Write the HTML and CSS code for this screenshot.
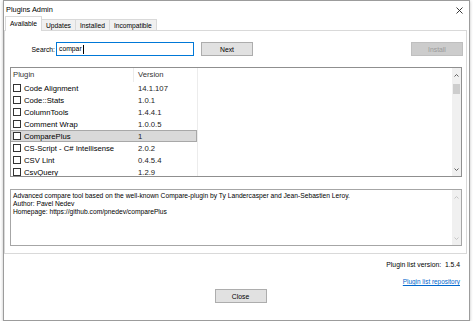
FILE: index.html
```html
<!DOCTYPE html>
<html lang="en">
<head>
    <meta charset="UTF-8">
    <meta name="viewport" content="width=device-width, initial-scale=1.0">
    <title>Plugins Admin</title>
    <link rel="stylesheet" href="styles.css">
</head>
<body>
    <div class="window">
        <div class="titlebar">
            <span class="title">Plugins Admin</span>
            <svg class="close-x" width="7" height="7" viewBox="0 0 7 7">
                <path d="M0.5 0.5 L6.5 6.5 M6.5 0.5 L0.5 6.5" stroke="#222" stroke-width="0.9" fill="none"/>
            </svg>
        </div>
        <div class="tabs">
            <div class="tab active">Available</div>
            <div class="tab">Updates</div>
            <div class="tab">Installed</div>
            <div class="tab">Incompatible</div>
        </div>
        <div class="panel">
            <div class="search-row">
                <span class="search-label">Search:</span>
                <div class="search-input">compar<span class="caret"></span></div>
                <button class="btn">Next</button>
                <span class="spacer"></span>
                <button class="btn btn-disabled">Install</button>
            </div>
            <div class="list">
                <div class="list-body">
                    <div class="list-cols">
                        <div class="list-head">
                            <span class="head-cell first">Plugin</span>
                            <span class="head-cell">Version</span>
                        </div>
                        <div class="row"><span class="name"><span class="check"></span>Code Alignment</span><span class="ver">14.1.107</span></div>
                        <div class="row"><span class="name"><span class="check"></span>Code::Stats</span><span class="ver">1.0.1</span></div>
                        <div class="row"><span class="name"><span class="check"></span>ColumnTools</span><span class="ver">1.4.4.1</span></div>
                        <div class="row"><span class="name"><span class="check"></span>Comment Wrap</span><span class="ver">1.0.0.5</span></div>
                        <div class="row selected"><span class="name"><span class="check"></span>ComparePlus</span><span class="ver">1</span></div>
                        <div class="row"><span class="name"><span class="check"></span>CS-Script - C# Intellisense</span><span class="ver">2.0.2</span></div>
                        <div class="row"><span class="name"><span class="check"></span>CSV Lint</span><span class="ver">0.4.5.4</span></div>
                        <div class="row"><span class="name"><span class="check"></span>CsvQuery</span><span class="ver">1.2.9</span></div>
                    </div>
                </div>
                <div class="vscroll">
                    <div class="arrow">
                        <svg width="5" height="3" viewBox="0 0 5 3"><path d="M0.5 2.5 L2.5 0.5 L4.5 2.5" stroke="#606060" fill="none"/></svg>
                    </div>
                    <div class="thumb"></div>
                    <div class="track"></div>
                    <div class="arrow">
                        <svg width="5" height="3" viewBox="0 0 5 3"><path d="M0.5 0.5 L2.5 2.5 L4.5 0.5" stroke="#606060" fill="none"/></svg>
                    </div>
                </div>
            </div>
            <div class="desc">
                <div class="desc-text">
                    Advanced compare tool based on the well-known Compare-plugin by Ty Landercasper and Jean-Sebastien Leroy.<br>
                    Author: Pavel Nedev<br>
                    Homepage: https://github.com/pnedev/comparePlus
                </div>
                <div class="vscroll disabled">
                    <div class="arrow">
                        <svg width="5" height="3" viewBox="0 0 5 3"><path d="M0.5 2.5 L2.5 0.5 L4.5 2.5" stroke="#c4c4c4" fill="none"/></svg>
                    </div>
                    <div class="track"></div>
                    <div class="arrow">
                        <svg width="5" height="3" viewBox="0 0 5 3"><path d="M0.5 0.5 L2.5 2.5 L4.5 0.5" stroke="#c4c4c4" fill="none"/></svg>
                    </div>
                </div>
            </div>
        </div>
        <div class="footer">
            <div class="list-version">Plugin list version:&nbsp; 1.5.4</div>
            <a class="repo-link" href="#">Plugin list repository</a>
            <button class="btn close-btn">Close</button>
        </div>
    </div>
</body>
</html>
```

FILE: styles.css
```css
body {
    font-family: 'Liberation Sans', Arial, sans-serif;
    margin: 0;
    background-color: #ffffff;
}
.window {
    box-sizing: border-box;
    margin-left: 3px;
    width: 467px;
    height: 321px;
    border: 1px solid #9c9c9c;
    background-color: #ffffff;
    box-shadow: 0 1px 3px rgba(0, 0, 0, 0.25);
    display: flex;
    flex-direction: column;
}
.titlebar {
    height: 16px;
    display: flex;
    align-items: center;
    justify-content: space-between;
    padding: 0 6px 0 2px;
}
.title {
    font-size: 7.4px;
    color: #000;
}
.close-x {
    margin-top: 2px;
}
.tabs {
    display: flex;
    align-items: flex-end;
    height: 14px;
    padding-left: 1px;
    margin-bottom: -1px;
    position: relative;
    z-index: 1;
}
.tab {
    box-sizing: border-box;
    height: 12px;
    line-height: 11px;
    padding: 0 4px;
    font-size: 6.7px;
    color: #000;
    background-color: #f0f0f0;
    border: 1px solid #d9d9d9;
    border-left: none;
}
.tab.active {
    height: 15px;
    line-height: 13px;
    background-color: #ffffff;
    border-left: 1px solid #d9d9d9;
    border-bottom: none;
}
.panel {
    box-sizing: border-box;
    height: 224px;
    margin-right: 2px;
    border: 1px solid #d9d9d9;
    padding: 11px 4px 0 5px;
    background-color: #ffffff;
}
.search-row {
    display: flex;
    align-items: center;
    height: 14px;
}
.search-label {
    width: 45px;
    text-align: right;
    font-size: 6.8px;
    margin-right: 1px;
}
.search-input {
    box-sizing: border-box;
    width: 138px;
    height: 14px;
    border: 1px solid #0078d7;
    font-size: 6.8px;
    line-height: 12px;
    padding-left: 2px;
    display: flex;
    align-items: center;
}
.caret {
    width: 1px;
    height: 9px;
    background-color: #000;
    margin-left: 1px;
}
.btn {
    box-sizing: border-box;
    width: 52px;
    height: 14px;
    padding: 0;
    background-color: #e1e1e1;
    border: 1px solid #adadad;
    font-family: inherit;
    font-size: 6.8px;
    color: #000;
}
.search-row .btn {
    margin-left: 7px;
}
.spacer {
    flex: 1;
}
.search-row .btn-disabled {
    margin-right: -1px;
    background-color: #cccccc;
    border-color: #bfbfbf;
    color: #9a9a9a;
}
.list {
    box-sizing: border-box;
    display: flex;
    height: 110px;
    margin-top: 11px;
    border: 1px solid #8f8f8f;
    overflow: hidden;
}
.list-body {
    flex: 1;
    overflow: hidden;
}
.list-cols {
    width: 186px;
    height: 100%;
    border-right: 1px solid #ececec;
}
.list-head {
    display: grid;
    grid-template-columns: 123px 63px;
    height: 14px;
    align-items: center;
}
.head-cell {
    font-size: 7.7px;
    color: #333;
    padding-left: 4px;
    line-height: 14px;
}
.head-cell.first {
    padding-left: 2px;
    border-right: 1px solid #ececec;
}
.row {
    box-sizing: border-box;
    display: grid;
    grid-template-columns: 123px 63px;
    height: 12px;
    align-items: center;
    font-size: 7.7px;
    color: #000;
}
.row.selected {
    background-color: #d9d9d9;
    border: 1px solid #a8a8a8;
    border-left: none;
}
.name {
    display: flex;
    align-items: center;
    padding-left: 2px;
    white-space: nowrap;
}
.check {
    box-sizing: border-box;
    width: 8px;
    height: 8px;
    border: 1px solid #333;
    background-color: #fff;
    margin-right: 3px;
}
.ver {
    padding-left: 4px;
    color: #222;
}
.vscroll {
    width: 9px;
    background-color: #f0f0f0;
    display: flex;
    flex-direction: column;
}
.arrow {
    height: 14px;
    display: flex;
    align-items: center;
    justify-content: center;
}
.thumb {
    height: 10px;
    margin: 2px 1px 0 1px;
    background-color: #cdcdcd;
}
.track {
    flex: 1;
}
.desc {
    box-sizing: border-box;
    display: flex;
    height: 57px;
    margin-top: 12px;
    border: 1px solid #a6a6a6;
}
.desc-text {
    flex: 1;
    font-size: 6.7px;
    line-height: 8px;
    padding: 2px 2px;
    color: #000;
}
.footer {
    flex: 1;
    display: flex;
    flex-direction: column;
    align-items: flex-end;
    padding: 6px 9px 0 0;
}
.list-version {
    font-size: 6.8px;
    line-height: 9px;
    color: #000;
}
.repo-link {
    margin-top: 8px;
    font-size: 6.4px;
    line-height: 9px;
    color: #0066cc;
}
.close-btn {
    align-self: center;
    margin-top: 3px;
    margin-left: 17px;
}
```
